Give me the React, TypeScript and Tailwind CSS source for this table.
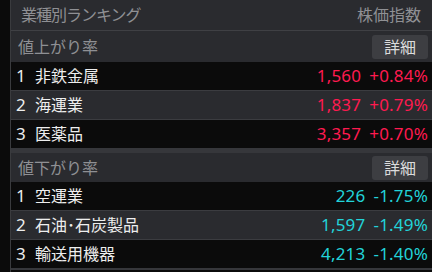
const up = [
  { rank: 1, name: "非鉄金属", price: "1,560", change: "+0.84%" },
  { rank: 2, name: "海運業", price: "1,837", change: "+0.79%" },
  { rank: 3, name: "医薬品", price: "3,357", change: "+0.70%" },
];

const down = [
  { rank: 1, name: "空運業", price: "226", change: "-1.75%" },
  { rank: 2, name: "石油･石炭製品", price: "1,597", change: "-1.49%" },
  { rank: 3, name: "輸送用機器", price: "4,213", change: "-1.40%" },
];

type Row = { rank: number; name: string; price: string; change: string };

function Section({ title, rows, color, headH }: { title: string; rows: Row[]; color: string; headH: string }) {
  return (
    <div>
      <div className={`flex items-center justify-between pl-[7px] pr-[4px] ${headH}`}>
        <span className="text-[16px] text-[#8f9094]">{title}</span>
        <button className="w-[56px] h-[24px] rounded-[3px] bg-[#3d3e42] text-[16px] text-[#dcdcdc] leading-none">
          詳細
        </button>
      </div>
      {rows.map((r, i) => (
        <div
          key={r.rank}
          className={`flex items-center h-[28px] pl-[5px] pr-[4px] text-[16px] ${
            i % 2 === 0 ? "bg-[#0b0b0b]" : "bg-[#2a2b2f]"
          } ${i < rows.length - 1 ? "border-b border-[#3b3c40] box-content" : ""}`}
        >
          <span className="w-[19px] text-[17px] text-[#eeeeee]">{r.rank}</span>
          <span className="text-[#eeeeee]">{r.name}</span>
          <span className={`ml-auto text-[17px] tracking-[0.2px] ${color}`}>{r.price}</span>
          <span className={`ml-[8px] text-[17px] tracking-[0.2px] ${color}`}>{r.change}</span>
        </div>
      ))}
    </div>
  );
}

export default function App() {
  return (
    <div
      className="w-[432px] h-[272px] bg-[#0b0b0b] flex overflow-hidden"
      style={{ fontFamily: '"Noto Sans", "Noto Sans CJK JP", sans-serif' }}
    >
      <div className="w-[10px] shrink-0" />
      <div className="flex-1 flex flex-col border-l border-[#3a3b3e]">
        <div className="bg-[#2a2b2f]">
          <div className="flex items-center justify-between h-[30px] pl-[10px] pr-[11px] border-b border-[#3f4044] box-content text-[16px] text-[#8f9094]">
            <span className="tracking-[-1px]">業種別ランキング</span>
            <span>株価指数</span>
          </div>
          <Section title="値上がり率" rows={up} color="text-[#ff1a50]" headH="h-[31px]" />
          <div className="h-[5px] bg-[#36373b]" />
          <Section title="値下がり率" rows={down} color="text-[#22d3d9]" headH="h-[29px]" />
          <div className="h-[2px] bg-[#36373b]" />
        </div>
      </div>
    </div>
  );
}
